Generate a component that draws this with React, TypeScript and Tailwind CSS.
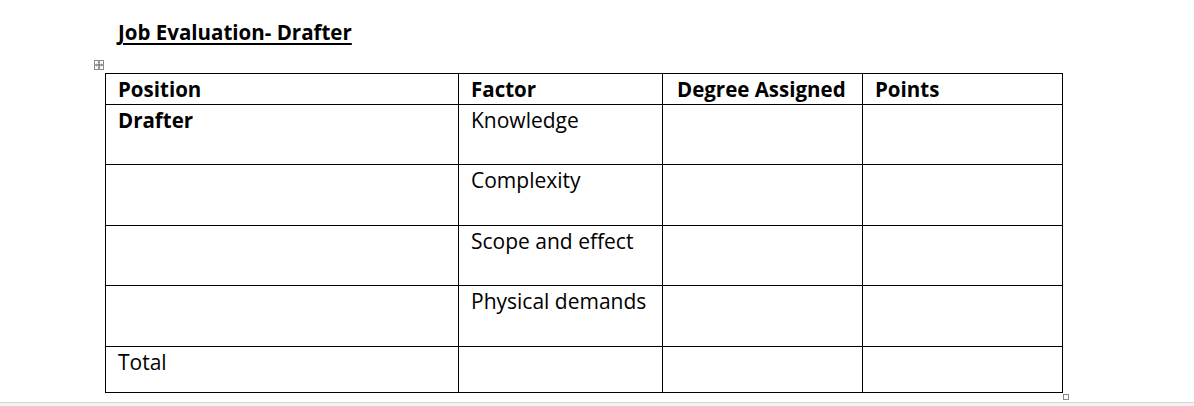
import React from "react"

const factors = ["Knowledge", "Complexity", "Scope and effect", "Physical demands"]
const rowHeights = ["h-[60px]", "h-[61px]", "h-[60px]", "h-[61px]"]

function MoveHandle() {
  return (
    <div className="absolute left-[-11px] top-[-13px] w-[10px] h-[10px] border border-[#8a8a8a] bg-white flex items-center justify-center">
      <svg width="8" height="8" viewBox="0 0 8 8">
        <path d="M4 0.5V7.5M0.5 4H7.5" stroke="#555" strokeWidth="1" />
        <path d="M4 0.5L3 1.6M4 0.5L5 1.6M4 7.5L3 6.4M4 7.5L5 6.4M0.5 4L1.6 3M0.5 4L1.6 5M7.5 4L6.4 3M7.5 4L6.4 5" stroke="#555" strokeWidth="0.8" fill="none" />
      </svg>
    </div>
  )
}

export default function App() {
  const cell = "border border-black align-top pl-[12px] pt-[3px] leading-[24px]"
  const bold = " font-bold text-[20.5px]"

  return (
    <div className="w-[1194px] h-[406px] bg-white relative overflow-hidden font-['Open_Sans',sans-serif] text-[21px] text-black">
      {/* Titulo */}
      <div className="pl-[118px] pt-[19px]">
        <h1 className="text-[20.5px] font-bold underline underline-offset-[3px] decoration-[1.5px] leading-[26px]">
          Job Evaluation- Drafter
        </h1>
      </div>

      {/* Tabela */}
      <div className="relative ml-[105px] mt-[28px] w-[957px]">
        <MoveHandle />
        <table className="border-collapse table-fixed w-[957px]">
          <colgroup>
            <col className="w-[353px]" />
            <col className="w-[204px]" />
            <col className="w-[200px]" />
            <col className="w-[200px]" />
          </colgroup>
          <tbody>
            <tr className="h-[31px]">
              <td className={cell + bold}>Position</td>
              <td className={cell + bold}>Factor</td>
              <td className={cell + bold + " pl-[14px]"}>Degree Assigned</td>
              <td className={cell + bold}>Points</td>
            </tr>
            {factors.map((f, i) => (
              <tr key={f} className={rowHeights[i]}>
                <td className={cell + bold}>{i === 0 ? "Drafter" : ""}</td>
                <td className={cell}>{f}</td>
                <td className={cell}></td>
                <td className={cell}></td>
              </tr>
            ))}
            <tr className="h-[46px]">
              <td className={cell}>Total</td>
              <td className={cell}></td>
              <td className={cell}></td>
              <td className={cell}></td>
            </tr>
          </tbody>
        </table>
        {/* alca de redimensionar */}
        <div className="absolute right-[-7px] bottom-[-7px] w-[6px] h-[6px] border border-[#8a8a8a] bg-white" />
      </div>

      {/* barra inferior */}
      <div className="absolute left-0 right-0 bottom-0 h-[4px] border-t border-[#d6d6d6] bg-[#f2f2f2]" />
    </div>
  )
}
